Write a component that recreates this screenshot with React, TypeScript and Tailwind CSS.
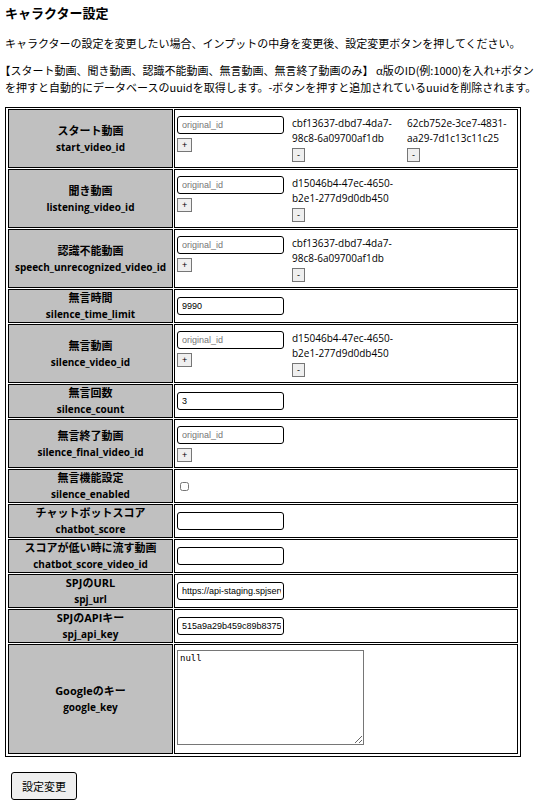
import { type ReactNode } from "react";

type Field =
  | { kind: "video"; id: string; name: string; uuids: string[] }
  | { kind: "text"; id: string; name: string; value: string }
  | { kind: "check"; id: string; name: string }
  | { kind: "area"; id: string; name: string; value: string };

const fields: Field[] = [
  {
    kind: "video",
    id: "start_video_id",
    name: "スタート動画",
    uuids: ["cbf13637-dbd7-4da7-98c8-6a09700af1db", "62cb752e-3ce7-4831-aa29-7d1c13c11c25"],
  },
  { kind: "video", id: "listening_video_id", name: "聞き動画", uuids: ["d15046b4-47ec-4650-b2e1-277d9d0db450"] },
  {
    kind: "video",
    id: "speech_unrecognized_video_id",
    name: "認識不能動画",
    uuids: ["cbf13637-dbd7-4da7-98c8-6a09700af1db"],
  },
  { kind: "text", id: "silence_time_limit", name: "無言時間", value: "9990" },
  { kind: "video", id: "silence_video_id", name: "無言動画", uuids: ["d15046b4-47ec-4650-b2e1-277d9d0db450"] },
  { kind: "text", id: "silence_count", name: "無言回数", value: "3" },
  { kind: "video", id: "silence_final_video_id", name: "無言終了動画", uuids: [] },
  { kind: "check", id: "silence_enabled", name: "無言機能設定" },
  { kind: "text", id: "chatbot_score", name: "チャットボットスコア", value: "" },
  { kind: "text", id: "chatbot_score_video_id", name: "スコアが低い時に流す動画", value: "" },
  { kind: "text", id: "spj_url", name: "SPJのURL", value: "https://api-staging.spjserv" },
  { kind: "text", id: "spj_api_key", name: "SPJのAPIキー", value: "515a9a29b459c89b8375" },
  { kind: "area", id: "google_key", name: "Googleのキー", value: "null" },
];

const inputClass =
  "block h-[18px] w-[107px] rounded-[3px] border border-black bg-white pr-[2px] pl-1 font-['Liberation_Sans',sans-serif] text-[9px] leading-3 placeholder:text-[#757575]";

function SmallButton({ children, label }: { children: ReactNode; label: string }) {
  return (
    <button
      type="button"
      aria-label={label}
      className="flex h-[14px] items-center border border-[#767676] bg-[#efefef] px-1 font-['Liberation_Sans',sans-serif] text-[9px] leading-3"
    >
      {children}
    </button>
  );
}

function Control({ field }: { field: Field }) {
  switch (field.kind) {
    case "video":
      return (
        <div className="flex gap-2 pt-[6px] pb-[5px]">
          <div className="flex w-[107px] flex-col items-start gap-1">
            <input id={field.id} placeholder="original_id" className={inputClass} />
            <SmallButton label="追加">+</SmallButton>
          </div>
          {field.uuids.map((uuid) => (
            <div key={uuid} className="flex w-[107px] flex-col items-start gap-[2px]">
              <p className="font-['Open_Sans',sans-serif] text-[10px] leading-[15px]">{uuid}</p>
              <SmallButton label="削除">-</SmallButton>
            </div>
          ))}
        </div>
      );
    case "text":
      return <input id={field.id} defaultValue={field.value} className={inputClass} />;
    case "check":
      return <input id={field.id} type="checkbox" className="ml-[3px] block size-[9px]" />;
    case "area":
      return (
        <div className="pt-[5px] pb-2">
          <textarea
            id={field.id}
            defaultValue={field.value}
            className="block h-[95px] w-[187px] resize border border-[#767676] bg-white p-[2px] font-['DejaVu_Sans_Mono',monospace] text-[9px] leading-[11px]"
          />
        </div>
      );
  }
}

export default function App() {
  return (
    <main
      lang="ja"
      className="bg-white pt-1 pl-[5px] font-['Noto_Sans_CJK_JP',sans-serif] text-[11px] leading-[17px] text-black"
    >
      <h1 className="text-[13px] leading-[18px] font-bold">キャラクター設定</h1>
      <p className="mt-[13px]">
        キャラクターの設定を変更したい場合、インプットの中身を変更後、設定変更ボタンを押してください。
      </p>
      <p className="mt-[10px] [text-spacing-trim:trim-start]">
        【スタート動画、聞き動画、認識不能動画、無言動画、無言終了動画のみ】 α版のID(例:1000)を入れ+ボタンを押すと自動的にデータベースのuuidを取得します。-ボタンを押すと追加されているuuidを削除されます。
      </p>
      <form onSubmit={(e) => e.preventDefault()}>
        <table className="mt-[11px] border-separate border-spacing-px border border-black p-px pt-0">
          <tbody>
            {fields.map((field) => (
              <tr key={field.id}>
                <th
                  scope="row"
                  className="w-[165px] border border-black bg-[#c0c0c0] p-0 align-middle font-['Open_Sans','Noto_Sans_CJK_JP',sans-serif] leading-4 font-bold"
                >
                  <label htmlFor={field.id} className="flex flex-col items-center">
                    <span>{field.name}</span>
                    <span className="text-[10px]">{field.id}</span>
                  </label>
                </th>
                <td className="w-[344px] border border-black p-0 pl-[2px] align-middle">
                  <Control field={field} />
                </td>
              </tr>
            ))}
          </tbody>
        </table>
        <button
          type="submit"
          className="mt-[15px] ml-[6px] block rounded-[3px] border border-black bg-[#efefef] px-[10px] py-[5px] leading-4"
        >
          設定変更
        </button>
      </form>
    </main>
  );
}
